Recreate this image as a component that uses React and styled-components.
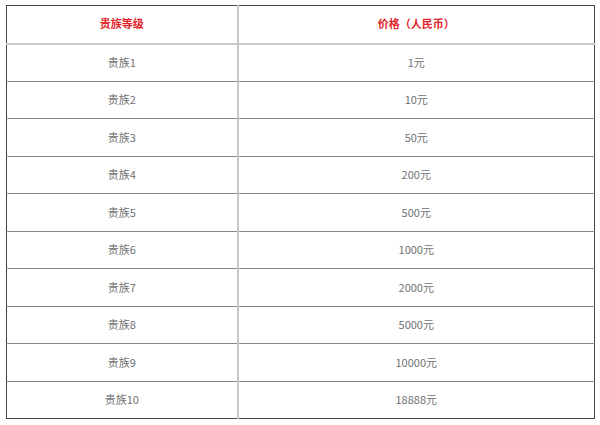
import styled, { createGlobalStyle } from "styled-components";

const GlobalStyle = createGlobalStyle`
  html, body {
    margin: 0;
    padding: 0;
    background: #fff;
  }
  body {
    font-family: "Microsoft YaHei", "Noto Sans CJK SC", "Noto Sans", sans-serif;
  }
`;

const levels = [
  { name: "贵族1", price: "1元" },
  { name: "贵族2", price: "10元" },
  { name: "贵族3", price: "50元" },
  { name: "贵族4", price: "200元" },
  { name: "贵族5", price: "500元" },
  { name: "贵族6", price: "1000元" },
  { name: "贵族7", price: "2000元" },
  { name: "贵族8", price: "5000元" },
  { name: "贵族9", price: "10000元" },
  { name: "贵族10", price: "18888元" },
];

const Page = styled.div`
  padding: 5px 0 0 6px;
`;

const Table = styled.table`
  width: 589px;
  border-collapse: collapse;
  border: 1px solid #444;
  table-layout: fixed;
`;

const HeadCell = styled.th`
  box-sizing: border-box;
  height: 38px;
  padding: 0 0 2px;
  font-size: 11px;
  font-weight: bold;
  color: #e2262b;
  text-align: center;
  border-bottom: 2px solid #c8c8c8;
  border-left: ${(p) => (p.$first ? "none" : "2px solid #c8c8c8")};
`;

const Cell = styled.td`
  box-sizing: border-box;
  height: 37.5px;
  padding: 0 0 1px;
  font-size: 11px;
  color: #707070;
  text-align: center;
  border-top: 1px solid #888;
  border-left: ${(p) => (p.$first ? "none" : "2px solid #c8c8c8")};
`;

const App = () => {
  return (
    <Page>
      <GlobalStyle />
      <Table>
        <colgroup>
          <col style={{ width: 231 }} />
          <col />
        </colgroup>
        <thead>
          <tr>
            <HeadCell $first>贵族等级</HeadCell>
            <HeadCell>价格（人民币）</HeadCell>
          </tr>
        </thead>
        <tbody>
          {levels.map((l) => (
            <tr key={l.name}>
              <Cell $first>{l.name}</Cell>
              <Cell>{l.price}</Cell>
            </tr>
          ))}
        </tbody>
      </Table>
    </Page>
  );
};

export default App;
